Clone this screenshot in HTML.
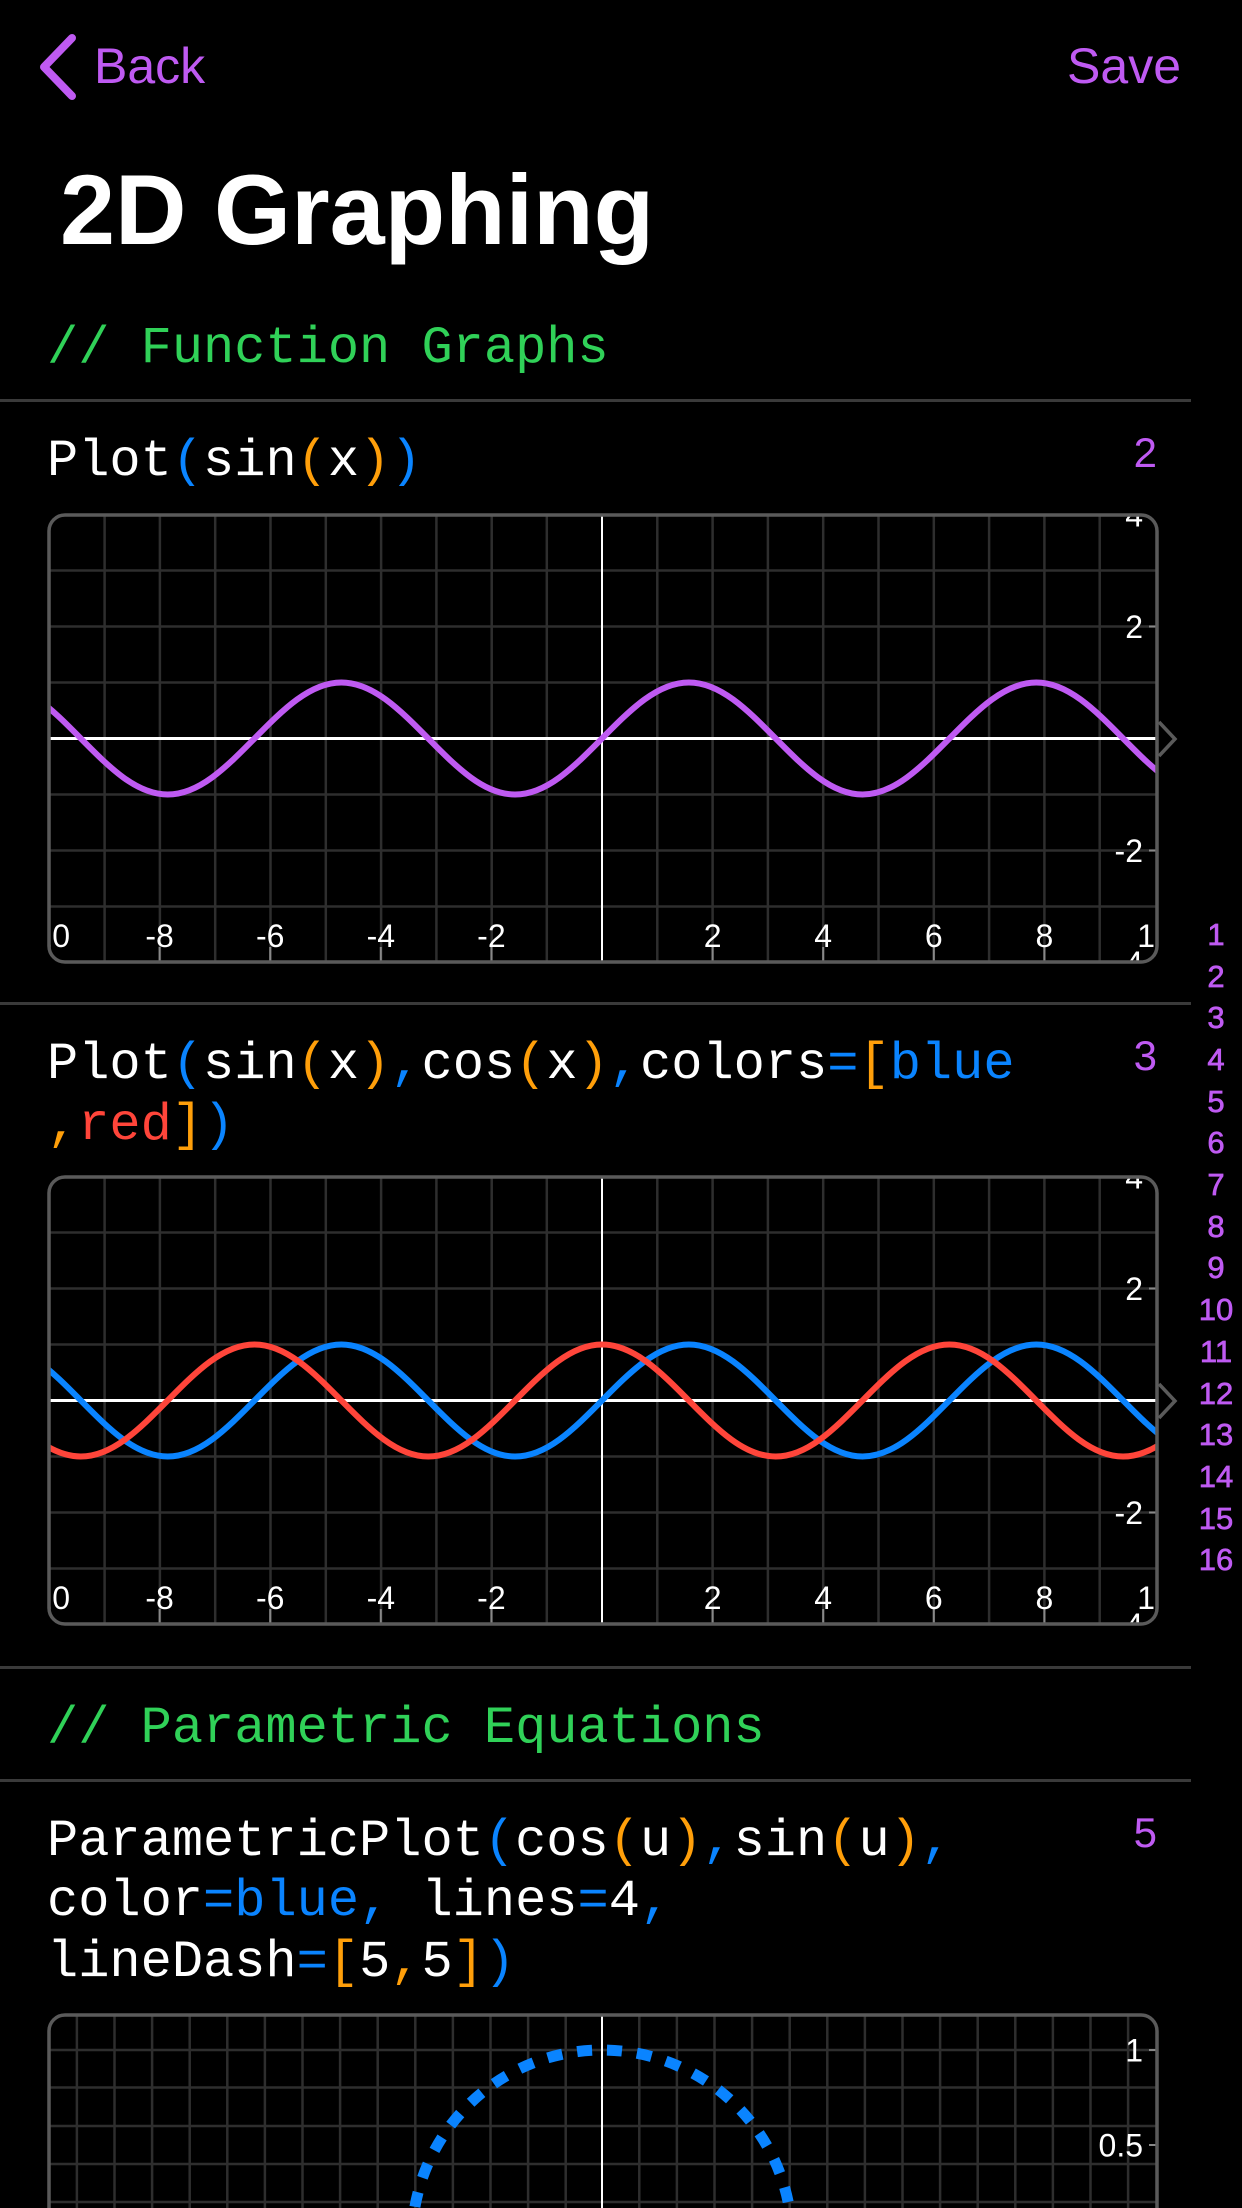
<!DOCTYPE html>
<html><head><meta charset="utf-8"><style>
html,body{margin:0;padding:0;background:#000;width:1242px;height:2208px;overflow:hidden}
svg{display:block}
::-webkit-scrollbar{display:none}
.m{font-family:"Liberation Mono",monospace;font-size:52px}
.s{font-family:"Liberation Sans",sans-serif}
.w{fill:#fff}.b{fill:#0a84ff}.o{fill:#ff9f0a}.r{fill:#ff453a}
.lab{font-family:"Liberation Sans",sans-serif;font-size:32px;fill:#fff}
.idx{font-family:"Liberation Sans",sans-serif;font-size:31px;fill:#bf5af2;stroke:#bf5af2;stroke-width:0.7;text-anchor:middle}
</style></head><body>
<svg width="1242" height="2208" viewBox="0 0 1242 2208" xmlns="http://www.w3.org/2000/svg">
<defs>
<clipPath id="c1"><rect x="0" y="0" width="1108" height="447" rx="16"/></clipPath>
<clipPath id="c3"><rect x="0" y="0" width="1108" height="300" rx="16"/></clipPath>
<g id="grid">
<path d="M55.6 0V447M110.9 0V447M166.2 0V447M221.5 0V447M276.8 0V447M332.1 0V447M387.4 0V447M442.7 0V447M497.8 0V447M608.3 0V447M663.6 0V447M718.9 0V447M774.2 0V447M829.5 0V447M884.8 0V447M940.1 0V447M995.4 0V447M1050.7 0V447M0 55.5H1108M0 111.5H1108M0 167.5H1108M0 279.5H1108M0 335.5H1108M0 391.5H1108" stroke="#2e2e2e" stroke-width="2.5" fill="none"/>
<path d="M553 0V447" stroke="#fff" stroke-width="2"/>
<path d="M0 223.5H1108" stroke="#fff" stroke-width="3"/>
<path d="M110.6 432V447M221.2 432V447M331.8 432V447M442.4 432V447M663.6 432V447M774.2 432V447M884.8 432V447M995.4 432V447M1100 111.5H1108M1100 335.5H1108" stroke="#888" stroke-width="2"/>
<g class="lab">
<text x="21" y="432" text-anchor="end">-10</text>
<text x="110.6" y="432" text-anchor="middle">-8</text>
<text x="221.2" y="432" text-anchor="middle">-6</text>
<text x="331.8" y="432" text-anchor="middle">-4</text>
<text x="442.4" y="432" text-anchor="middle">-2</text>
<text x="663.6" y="432" text-anchor="middle">2</text>
<text x="774.2" y="432" text-anchor="middle">4</text>
<text x="884.8" y="432" text-anchor="middle">6</text>
<text x="995.4" y="432" text-anchor="middle">8</text>
<text x="1106" y="432" text-anchor="middle">10</text>
<text x="1094" y="11.5" text-anchor="end">4</text>
<text x="1094" y="123" text-anchor="end">2</text>
<text x="1094" y="347" text-anchor="end">-2</text>
<text x="1094" y="459" text-anchor="end">-4</text>
</g>
</g>
</defs>

<path d="M72 38 L44 67 L72 96" stroke="#bf5af2" stroke-width="8" fill="none" stroke-linecap="round" stroke-linejoin="round"/>
<text x="94" y="83" class="s" font-size="50" fill="#bf5af2">Back</text>
<text x="1181" y="83" class="s" font-size="50" fill="#bf5af2" text-anchor="end">Save</text>
<text x="60" y="244" class="s" font-size="99" font-weight="bold" fill="#fff">2D Graphing</text>

<text x="47" y="362" class="m" fill="#30d158">// Function Graphs</text>
<rect x="0" y="399" width="1191" height="3" fill="#3a3a3a"/>

<text x="47" y="475" class="m"><tspan class="w">Plot</tspan><tspan class="b">(</tspan><tspan class="w">sin</tspan><tspan class="o">(</tspan><tspan class="w">x</tspan><tspan class="o">)</tspan><tspan class="b">)</tspan></text>
<text x="1157" y="467" class="s" font-size="42" fill="#bf5af2" text-anchor="end">2</text>

<g transform="translate(49,515)">
<g clip-path="url(#c1)">
<use href="#grid"/>
<path d="M-141.9 223.5 c29.04,-29.4 55.6,-56 86.86,-56 c31.26,0 57.82,26.6 86.86,56 c29.04,29.4 55.6,56 86.86,56 c31.26,0 57.82,-26.6 86.86,-56 c29.04,-29.4 55.6,-56 86.86,-56 c31.26,0 57.82,26.6 86.86,56 c29.04,29.4 55.6,56 86.86,56 c31.26,0 57.82,-26.6 86.86,-56 c29.04,-29.4 55.6,-56 86.86,-56 c31.26,0 57.82,26.6 86.86,56 c29.04,29.4 55.6,56 86.86,56 c31.26,0 57.82,-26.6 86.86,-56 c29.04,-29.4 55.6,-56 86.86,-56 c31.26,0 57.82,26.6 86.86,56 c29.04,29.4 55.6,56 86.86,56 c31.26,0 57.82,-26.6 86.86,-56" stroke="#bf5af2" stroke-width="6" fill="none"/>
</g>
<rect x="0" y="0" width="1108" height="447" rx="16" fill="none" stroke="#5a5a5a" stroke-width="3.5"/>
</g>
<path d="M1159 722 L1175 739 L1159 756" stroke="#5a5a5a" stroke-width="3.5" fill="none"/>

<g class="idx">
<text x="1216" y="945">1</text><text x="1216" y="987">2</text><text x="1216" y="1028">3</text><text x="1216" y="1070">4</text>
<text x="1216" y="1112">5</text><text x="1216" y="1153">6</text><text x="1216" y="1195">7</text><text x="1216" y="1237">8</text>
<text x="1216" y="1278">9</text><text x="1216" y="1320">10</text><text x="1216" y="1362">11</text><text x="1216" y="1404">12</text>
<text x="1216" y="1445">13</text><text x="1216" y="1487">14</text><text x="1216" y="1529">15</text><text x="1216" y="1570">16</text>
</g>

<rect x="0" y="1002" width="1191" height="3" fill="#3a3a3a"/>
<text x="47" y="1078" class="m"><tspan class="w">Plot</tspan><tspan class="b">(</tspan><tspan class="w">sin</tspan><tspan class="o">(</tspan><tspan class="w">x</tspan><tspan class="o">)</tspan><tspan class="b">,</tspan><tspan class="w">cos</tspan><tspan class="o">(</tspan><tspan class="w">x</tspan><tspan class="o">)</tspan><tspan class="b">,</tspan><tspan class="w">colors</tspan><tspan class="b">=</tspan><tspan class="o">[</tspan><tspan class="b">blue</tspan></text>
<text x="47" y="1139" class="m"><tspan class="o">,</tspan><tspan class="r">red</tspan><tspan class="o">]</tspan><tspan class="b">)</tspan></text>
<text x="1157" y="1070" class="s" font-size="42" fill="#bf5af2" text-anchor="end">3</text>

<g transform="translate(49,1177)">
<g clip-path="url(#c1)">
<use href="#grid"/>
<path d="M-141.9 223.5 c29.04,-29.4 55.6,-56 86.86,-56 c31.26,0 57.82,26.6 86.86,56 c29.04,29.4 55.6,56 86.86,56 c31.26,0 57.82,-26.6 86.86,-56 c29.04,-29.4 55.6,-56 86.86,-56 c31.26,0 57.82,26.6 86.86,56 c29.04,29.4 55.6,56 86.86,56 c31.26,0 57.82,-26.6 86.86,-56 c29.04,-29.4 55.6,-56 86.86,-56 c31.26,0 57.82,26.6 86.86,56 c29.04,29.4 55.6,56 86.86,56 c31.26,0 57.82,-26.6 86.86,-56 c29.04,-29.4 55.6,-56 86.86,-56 c31.26,0 57.82,26.6 86.86,56 c29.04,29.4 55.6,56 86.86,56 c31.26,0 57.82,-26.6 86.86,-56" stroke="#0a84ff" stroke-width="6" fill="none"/>
<path d="M-228.8 223.5 c29.04,-29.4 55.6,-56 86.86,-56 c31.26,0 57.82,26.6 86.86,56 c29.04,29.4 55.6,56 86.86,56 c31.26,0 57.82,-26.6 86.86,-56 c29.04,-29.4 55.6,-56 86.86,-56 c31.26,0 57.82,26.6 86.86,56 c29.04,29.4 55.6,56 86.86,56 c31.26,0 57.82,-26.6 86.86,-56 c29.04,-29.4 55.6,-56 86.86,-56 c31.26,0 57.82,26.6 86.86,56 c29.04,29.4 55.6,56 86.86,56 c31.26,0 57.82,-26.6 86.86,-56 c29.04,-29.4 55.6,-56 86.86,-56 c31.26,0 57.82,26.6 86.86,56 c29.04,29.4 55.6,56 86.86,56 c31.26,0 57.82,-26.6 86.86,-56" stroke="#ff453a" stroke-width="6" fill="none"/>
</g>
<rect x="0" y="0" width="1108" height="447" rx="16" fill="none" stroke="#5a5a5a" stroke-width="3.5"/>
</g>
<path d="M1159 1384 L1175 1401 L1159 1418" stroke="#5a5a5a" stroke-width="3.5" fill="none"/>

<rect x="0" y="1666" width="1191" height="3" fill="#3a3a3a"/>
<text x="47" y="1742" class="m" fill="#30d158">// Parametric Equations</text>
<rect x="0" y="1779" width="1191" height="3" fill="#3a3a3a"/>

<text x="47" y="1855" class="m"><tspan class="w">ParametricPlot</tspan><tspan class="b">(</tspan><tspan class="w">cos</tspan><tspan class="o">(</tspan><tspan class="w">u</tspan><tspan class="o">)</tspan><tspan class="b">,</tspan><tspan class="w">sin</tspan><tspan class="o">(</tspan><tspan class="w">u</tspan><tspan class="o">)</tspan><tspan class="b">,</tspan></text>
<text x="47" y="1915" class="m"><tspan class="w">color</tspan><tspan class="b">=blue,</tspan><tspan class="w"> lines</tspan><tspan class="b">=</tspan><tspan class="w">4</tspan><tspan class="b">,</tspan></text>
<text x="47" y="1976" class="m"><tspan class="w">lineDash</tspan><tspan class="b">=</tspan><tspan class="o">[</tspan><tspan class="w">5</tspan><tspan class="o">,</tspan><tspan class="w">5</tspan><tspan class="o">]</tspan><tspan class="b">)</tspan></text>
<text x="1157" y="1847" class="s" font-size="42" fill="#bf5af2" text-anchor="end">5</text>

<g transform="translate(49,2015)">
<g clip-path="url(#c3)">
<path d="M27.9 0V300M65.5 0V300M103.1 0V300M140.7 0V300M178.3 0V300M215.9 0V300M253.5 0V300M291.1 0V300M328.7 0V300M366.3 0V300M403.9 0V300M441.5 0V300M479.1 0V300M516.7 0V300M590.3 0V300M627.9 0V300M665.5 0V300M703.1 0V300M740.7 0V300M778.3 0V300M815.9 0V300M853.5 0V300M891.1 0V300M928.7 0V300M966.3 0V300M1003.9 0V300M1041.5 0V300M1079.1 0V300M0 35H1108M0 72.5H1108M0 111H1108M0 149H1108M0 187H1108" stroke="#2e2e2e" stroke-width="2.5" fill="none"/>
<path d="M553 0V300" stroke="#fff" stroke-width="2"/>
<circle cx="553" cy="225" r="190" fill="none" stroke="#0a84ff" stroke-width="11" stroke-dasharray="15 15"/>
<path d="M1100 35H1108M1100 130H1108" stroke="#888" stroke-width="2"/>
<text x="1094" y="46.5" text-anchor="end" class="lab">1</text>
<text x="1094" y="141.5" text-anchor="end" class="lab">0.5</text>
</g>
<rect x="0" y="0" width="1108" height="300" rx="16" fill="none" stroke="#5a5a5a" stroke-width="3.5"/>
</g>
</svg>
</body></html>
